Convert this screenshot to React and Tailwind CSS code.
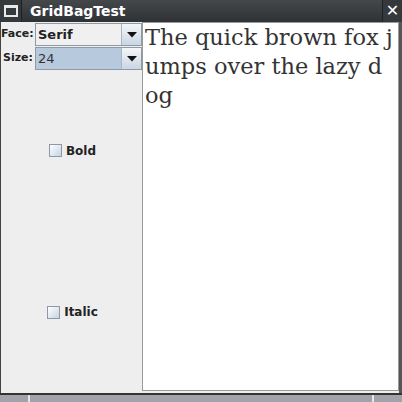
import React from "react";

function Arrow() {
  return (
    <svg width="10" height="6" viewBox="0 0 10 6">
      <path d="M0 0 H10 L5 5.5 Z" fill="#111" />
    </svg>
  );
}

function Combo({ value, selected }) {
  return (
    <div className="flex h-[23px] w-[107px] border border-[#8e9aa8]">
      <div
        className={
          "flex flex-1 items-center pl-[2px] text-[13px] " +
          (selected ? "bg-[#b7c9dd] text-[#333]" : "bg-[#f0f0f0] font-bold text-[#222]")
        }
      >
        {value}
      </div>
      <div className="flex w-[20px] items-center justify-center border-l border-[#aab6c4] bg-gradient-to-b from-[#f4f6f8] to-[#c9d6e4]">
        <Arrow />
      </div>
    </div>
  );
}

function Check({ label }) {
  return (
    <div className="flex flex-1 items-center justify-center pl-[2px]">
      <div className="flex items-center gap-[4px]">
        <div className="h-[13px] w-[13px] border border-[#8d99a6] bg-gradient-to-br from-[#ffffff] to-[#c6d4e3]" />
        <span className="text-[12px] font-bold text-[#222]">{label}</span>
      </div>
    </div>
  );
}

export default function App() {
  const lines = ["The quick brown fox j", "umps over the lazy d", "og"];
  return (
    <div
      className="flex h-[402px] w-[402px] flex-col bg-[#eeeeee]"
      style={{ fontFamily: '"DejaVu Sans", sans-serif' }}
    >
      {/* title bar */}
      <div className="flex h-[22px] bg-gradient-to-b from-[#45484b] to-[#2f3235]">
        <div className="flex w-[22px] items-center justify-center border-r border-[#1e2022] bg-[#36393c]">
          <div className="h-[12px] w-[14px] border-[2px] border-t-[3px] border-[#e8e8e8]" />
        </div>
        <div className="flex flex-1 items-center pl-[8px] text-[14px] font-bold text-white">
          GridBagTest
        </div>
        <div className="flex w-[20px] items-center justify-center border-l border-[#1e2022] bg-[#36393c] text-[16px] font-bold text-white">
          ✕
        </div>
      </div>

      <div className="flex flex-1 border-l border-[#444] border-r-[3px] border-r-[#555]">
        {/* left controls */}
        <div className="flex w-[141px] flex-col pt-[1px]">
          <div className="flex items-center">
            <span className="w-[34px] text-[11px] font-bold text-[#222]">Face:</span>
            <Combo value="Serif" />
          </div>
          <div className="mt-[1px] flex items-center">
            <span className="w-[34px] pl-[2px] text-[11px] font-bold text-[#222]">Size:</span>
            <Combo value="24" selected />
          </div>
          <div className="flex flex-1 flex-col">
            <Check label="Bold" />
            <Check label="Italic" />
          </div>
        </div>

        {/* text area */}
        <div className="mb-[2px] flex-1 border border-[#9a9a9a] bg-white pl-[2px]">
          {lines.map((l, i) => (
            <div
              key={i}
              className="h-[29px] whitespace-nowrap text-[22.5px] leading-[29px] text-[#333]"
              style={{ fontFamily: '"DejaVu Serif", serif' }}
            >
              {l}
            </div>
          ))}
        </div>
      </div>

      {/* bottom frame */}
      <div className="flex h-[9px] border-t-[2px] border-[#333] bg-[#a2a2aa]">
        <div className="w-[30px] border-r-[2px] border-[#e6e6e6]" />
        <div className="flex-1 border-r-[2px] border-[#e6e6e6]" />
        <div className="w-[28px]" />
      </div>
    </div>
  );
}
